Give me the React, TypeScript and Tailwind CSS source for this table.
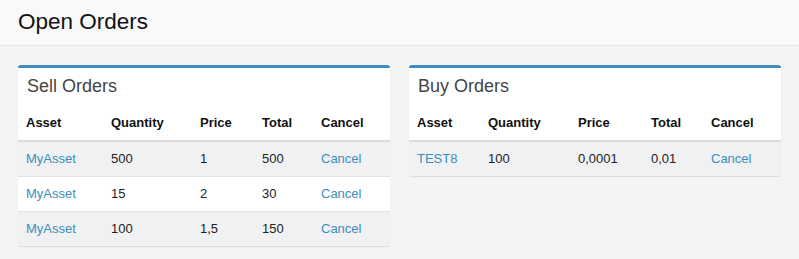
import React from 'react';

type Order = {
  asset: string;
  quantity: string;
  price: string;
  total: string;
};

const sellOrders: Order[] = [
  { asset: 'MyAsset', quantity: '500', price: '1', total: '500' },
  { asset: 'MyAsset', quantity: '15', price: '2', total: '30' },
  { asset: 'MyAsset', quantity: '100', price: '1,5', total: '150' },
];

const buyOrders: Order[] = [{ asset: 'TEST8', quantity: '100', price: '0,0001', total: '0,01' }];

function OrdersBox({ title, orders, widths }: { title: string; orders: Order[]; widths: string[] }) {
  const heads = ['Asset', 'Quantity', 'Price', 'Total', 'Cancel'];
  return (
    <div className="bg-white rounded-[3px] border-t-[3px] border-[#3c8dbc] shadow-[0_1px_1px_rgba(0,0,0,0.1)] overflow-hidden">
      <div className="h-[37px] flex items-center px-[9px] text-[18px] text-[#444]">{title}</div>
      <table className="w-full border-collapse text-[13px] text-[#222]">
        <thead>
          <tr className="h-[36px] border-b-2 border-[#dcdcdc]">
            {heads.map((h, i) => (
              <th key={h} className={`${widths[i]} text-left font-bold px-2 text-[#111]`}>
                {h}
              </th>
            ))}
          </tr>
        </thead>
        <tbody>
          {orders.map((o, i) => (
            <tr key={i} className={`h-[35px] border-t border-[#e2e2e2] first:border-t-0 ${i % 2 === 0 ? 'bg-[#f0f1f3]' : 'bg-white'}`}>
              <td className="px-2">
                <a className="text-[#3c8dbc]" href="#">{o.asset}</a>
              </td>
              <td className="px-2">{o.quantity}</td>
              <td className="px-2">{o.price}</td>
              <td className="px-2">{o.total}</td>
              <td className="px-2">
                <a className="text-[#3c8dbc]" href="#">Cancel</a>
              </td>
            </tr>
          ))}
        </tbody>
      </table>
    </div>
  );
}

export default function App() {
  return (
    <div className="min-h-[259px] bg-[#f4f4f5] font-['Liberation_Sans',Arial,sans-serif]">
      <div className="h-[46px] bg-[#f9f9f9] border-b border-[#e6e6e6] flex items-center px-[18px]">
        <h1 className="text-[22.5px] text-[#111] leading-none">Open Orders</h1>
      </div>
      <div className="grid grid-cols-2 gap-[19px] px-[18px] pt-[19px] items-start">
        <OrdersBox
          title="Sell Orders"
          orders={sellOrders}
          widths={['w-[85px]', 'w-[89px]', 'w-[62px]', 'w-[59px]', 'w-[77px]']}
        />
        <OrdersBox
          title="Buy Orders"
          orders={buyOrders}
          widths={['w-[71px]', 'w-[90px]', 'w-[73px]', 'w-[60px]', 'w-[78px]']}
        />
      </div>
    </div>
  );
}
